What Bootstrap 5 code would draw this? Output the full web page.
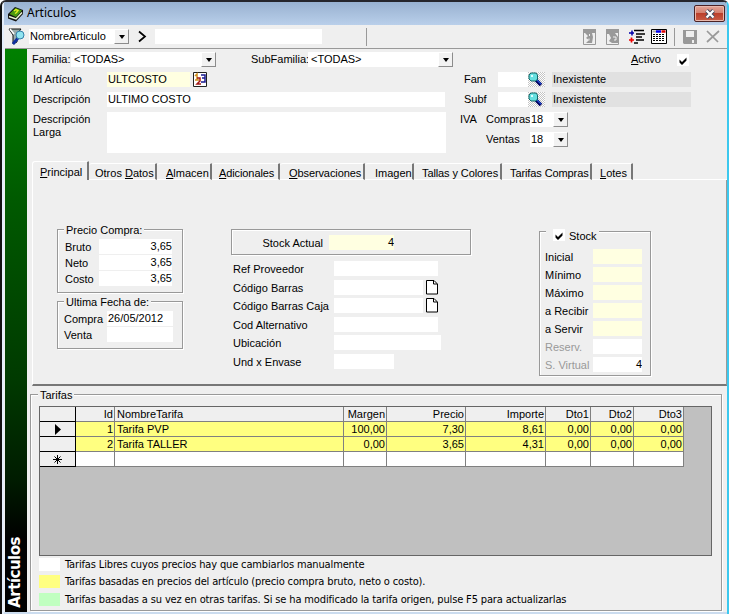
<!DOCTYPE html>
<html lang="es">
<head>
<meta charset="utf-8">
<title>Articulos</title>
<link href="https://cdn.jsdelivr.net/npm/bootstrap@5.3.0/dist/css/bootstrap.min.css" rel="stylesheet">
<style>
body{font:11px/15px "Liberation Sans",Arial,sans-serif;color:#000;background:#fff;width:729px;height:614px;overflow:hidden}
.win{width:729px;height:614px;background:#efefef;border-top:2px solid #25252b;border-left:2px solid #111;border-right:2px solid #3cc8ee;border-radius:6px 6px 0 0;box-shadow:inset 2px 0 #e4eefa,inset 0 -2px #cbdcef;padding-left:3px;white-space:nowrap;overflow:hidden}
.titlebar{height:23px;margin-left:-1px;background:linear-gradient(#98b1d0,#b9cfea);font:12px/22px "Noto Sans",sans-serif;padding:0 2px 0 3px}
.titlebar svg{margin-right:3px}
.closebtn{width:31px;height:17px;border:1px solid #4b2224;border-radius:2px;background:linear-gradient(#e3a698 0,#d4806f 45%,#bb3f2b 50%,#c95c45 100%);box-shadow:inset 0 0 0 1px #e9b9ad;margin-top:3px}
.closebtn svg{margin:0}
.toolbar{height:24px;border-bottom:1px solid #999;display:grid;grid-template-columns:24px 85px 15px 26px 167px 44px 217px 23px 23px 22px 23px 9px 23px 14px;align-items:center}
.filter{margin-left:3px}
.vsep{width:1px;height:18px;background:#999}
.fld{background:#fff;height:15px;overflow:hidden;line-height:14px;padding-left:1px}
.combo{padding-left:3px;line-height:15px}
.cream{background:#ffffe1}
.gray{background:#e1e1e1}
.drop{width:15px;height:15px;background:#f2f2f2;border:1px solid;border-color:#fff #8c8c8c #8c8c8c #fff;display:flex;align-items:center;justify-content:center}
.drop::after{content:"";border:3.5px solid transparent;border-top:4px solid #000;border-bottom:0}
.side{width:22px;background:linear-gradient(#008000 0,#005a00 150px,#003a00 330px,#001c00 430px,#000 490px);padding-bottom:4px}
.side span{writing-mode:vertical-rl;transform:rotate(180deg);color:#fff;font:bold 15px/20px "DejaVu Sans",sans-serif;letter-spacing:-.5px}
.main{width:700px}
.head{height:112px;padding-top:3px}
.hrow{display:grid;height:20px;align-items:start}
.r1{grid-template-columns:5px 39px 130px 50px 57px 130px 193px 46px 50px}
.r2{grid-template-columns:6px 74px 83px 3px 271px 34px 30px 24px 139px}
.r3{grid-template-columns:6px 74px 338px 19px 34px 30px 24px 139px}
.r4{grid-template-columns:6px 74px 339px 14px 26px 44px 23px 16px}
.area{height:41px}
.iva{row-gap:5px}
.r4>span{line-height:13px;padding-top:1px}
.chk{width:12px;height:12px;background:#fff;display:block}
.chk-active{margin-top:2px}
u{text-underline-offset:1px;text-decoration-thickness:1px}
.tabrow{height:19px;padding-left:5px;align-items:flex-end}
.tabrow>div{height:17px;border-right:2px solid #777;border-top:1px solid #fff;border-bottom:1px solid #fff;line-height:18px;border-radius:3px 1px 0 0}
.tabrow>.on{height:19px;border-bottom:0;border-left:1px solid #fff;line-height:20px;width:57px;padding-left:7px}
.t2{width:68px;padding-left:6px}.t3{width:55px;padding-left:9px}.t4{width:68px;padding-left:7px}.t5{width:85px;padding-left:9px}
.t6{width:49px;padding-left:10px}.t7{width:88px;padding-left:8px}.t8{width:90px;padding-left:8px}.t9{width:41px;padding-left:8px}
.t4,.t5,.t7,.t8{letter-spacing:-.1px}
.tabrow .fillline{flex:1;height:1px;border:0;background:#fff}
.panel{margin-left:5px;width:695px;height:206px;border-left:1px solid #fff;border-bottom:2px solid #777;border-right:1px solid #999}
.pane1{width:126px;margin:49px 0 0 24px}
.pane2{width:240px;margin:49px 0 0 48px}
.pane3{width:112px;margin:51px 0 0 68px}
.etch{border:1px solid #999;box-shadow:1px 1px #fff,inset 1px 1px #fff}
.cap{background:#efefef;width:max-content;height:14px;line-height:14px;padding:0 2px}
.g1{height:64px;margin-bottom:8px}.g1 .cap{margin:-7px 0 2px 6px}
.g1 .pr{display:grid;grid-template-columns:34px 73px;height:16px;padding-left:7px}
.g2{height:48px}.g2 .cap{margin:-7px 0 2px 6px}
.g2 .pr{display:grid;grid-template-columns:43px 66px;height:16px;padding-left:6px}
.pr>:first-child{padding-top:1px}
.stockbox{height:26px;display:grid;grid-template-columns:97px 65px;padding:5px 0 0 0;margin-bottom:6px}
.stockbox>span{padding:1px 6px 0 0}
.frow{display:grid;grid-template-columns:101px 89px 15px;padding-left:2px;height:18.6px;line-height:16px}
.frow svg{margin-left:3px}
.w104{width:104px}.w107{width:107px}.w60{width:60px}
.g3{height:145px}.g3 .cap{margin:-3px 0 4px 6px;padding-left:7px;height:16px;line-height:15px}
.g3 .cap svg{margin-right:4px}
.st{display:grid;grid-template-columns:48px 49px;height:18px;padding-left:5px;line-height:16px}
.off{color:#999}
.tbox{margin:8px 0 0 3px;width:692px;height:217px}
.tbox>.cap{margin:-8px 0 5px 7px;line-height:16px}
.gridbox{width:673px;height:150px;margin-left:8px;background:#c0c0c0;border:1px solid #666}
.tg{display:grid;width:644px;grid-template-columns:36px 39px 229px 43px 79px 80px 45px 43px 50px;grid-auto-rows:15px}
.tg>div{border-right:1px solid #808080;border-bottom:1px solid #808080;text-align:right;padding-right:1px;line-height:15px;overflow:hidden;height:15px}
.tg>.h{background:#efefef}.tg>.y{background:#ffff80}.tg>.w{background:#fff}
.tg>.l{text-align:left;padding-left:2px}
.tg>.k{border-color:#000;background:#efefef;display:flex;align-items:center;justify-content:center}
.legend{font:11px/14px "DejaVu Sans Condensed","DejaVu Sans",sans-serif;letter-spacing:-.145px;margin:2px 0 0 8px}
.legend>div{display:grid;grid-template-columns:21px auto;column-gap:5px;height:17px}
.legend>:last-child{padding-top:1px}
.legend i{height:13px}
.ly{background:#ffff80}.lg{background:#c0ffc0}
</style>
<script src="https://cdn.jsdelivr.net/npm/bootstrap@5.3.0/dist/js/bootstrap.bundle.min.js"></script>
</head>
<body>
<svg width="0" height="0" class="position-absolute"><defs>
<symbol id="tick" viewBox="0 0 12 12"><path d="M2.500 5.500v3l2.500 2.500 4.500-4.500V3.500L5 8z"/></symbol>
<pattern id="dots" width="2" height="2" patternUnits="userSpaceOnUse"><path fill="#fff" d="M0 0h2v2H0z"/><path fill="#c4c4c4" d="M0 0h1v1H0zM1 1h1v1H1z"/></pattern>
<symbol id="lens" viewBox="0 0 17 15"><path fill="url(#dots)" d="M0 0h17v15H0z"/><path d="M8 8l5 5" stroke="#000060" stroke-width="3.500"/><path d="M9 8l4 4" stroke="#2050d0" stroke-width="1.200"/><path d="M3 1h5l1.500 2v4L8 9H3L1 7V3z" fill="#66e0e0" stroke="#106868"/><path d="M3 3h2v2H3z" fill="#d8ffff"/></symbol>
<symbol id="sheet" viewBox="0 0 12 15"><path d="M.5.5H8L11.500 4v10H.5z" fill="#fff" stroke="#000"/><path d="M7.500.5v3.500H11" fill="none" stroke="#000"/></symbol>
</defs></svg>
<div class="win">
 <div class="titlebar d-flex">
  <svg width="17" height="17" viewBox="0 0 17 17" class="mt-1"><path d="M1 8L8 1l8 3v4L9 15.500 1 12.500z" fill="#111"/><path d="M2.500 8L8.500 2l6.500 2.500L9 11z" fill="#4c9a10"/><path d="M2 10.500l7 2.500 6-6.500" fill="none" stroke="#e8f4d0" stroke-width="1.500"/><path d="M7 5l2-1.500 2 1-1.500 2L8 7.500" fill="none" stroke="#e6f020" stroke-width="1.400"/></svg>
  <span class="flex-grow-1">Articulos</span>
  <div class="closebtn d-flex align-items-center justify-content-center"><svg width="12" height="10" viewBox="0 0 12 10"><path d="M2.500 1.500l7 7M9.500 1.500l-7 7" stroke="#444c60" stroke-width="4"/><path d="M2.500 1.500l7 7M9.500 1.500l-7 7" stroke="#fff" stroke-width="2.200"/></svg></div>
 </div>
 <div class="toolbar">
  <svg class="filter" width="18" height="17" viewBox="0 0 18 17"><path d="M1 1h12L9 6v8l-4 2V7z" fill="#9aa" stroke="#111"/><path d="M2 1l4 5" stroke="#fff" stroke-width="1.500"/><path d="M10 10l-5 6" stroke="#1030a0" stroke-width="2.800"/><circle cx="12" cy="7" r="4" fill="#90e4f0" stroke="#3480a8"/></svg>
  <div class="fld">NombreArticulo</div><div class="drop"></div>
  <svg width="10" height="13" viewBox="0 0 10 13" class="ms-2 overflow-visible"><path d="M2 1.500l6 5-6 5" fill="none" stroke="#000" stroke-width="1.700"/></svg>
  <div class="fld"></div><span></span><div class="vsep"></div>
  <svg width="13" height="16" viewBox="0 0 13 16"><path d="M.5.5h12v15H.5z" fill="#efefef" stroke="#999"/><path d="M0 0h13v4h-4l1 4-1 6H3l3-3-3-2 2-2-3-3H0z" fill="#999"/><path d="M6.500 5v2M6 9.500v2" stroke="#eee"/></svg>
  <svg width="13" height="16" viewBox="0 0 13 16"><path d="M.5.5h12v15H.5z" fill="#efefef" stroke="#999"/><path d="M0 0h13v4H9l3 4v6H6l-3-2 2-3-2-4H0z" fill="#999"/><path d="M7 8h3v3H8" stroke="#eee" fill="none"/></svg>
  <svg width="16" height="16" viewBox="0 0 16 16"><path d="M0 4h5M3 1.500v5" stroke="#00a" stroke-width="1.500"/><path d="M0 11h5M2.500 8.500v5" stroke="#e00" stroke-width="1.700"/><path d="M5 1.500h10M7 5h9M7 8h6M7 11h8M5 14h4" stroke="#000" stroke-width="1.500"/></svg>
  <svg width="16" height="15" viewBox="0 0 16 15"><path d="M.5.5h15v14H.5z" fill="#fff" stroke="#000"/><path d="M5 2.500h5" stroke="#00e" stroke-width="2.500"/><path d="M10.500 2.500h4" stroke="#d00" stroke-width="2.500"/><path d="M1.500 2.500H5" stroke="#aaa" stroke-width="2"/><path d="M2 5.500h12M2 7.500h12M2 9.500h12M2 11.500h12" stroke="#000" stroke-dasharray="2 1"/></svg>
  <div class="vsep"></div>
  <svg width="14" height="14" viewBox="0 0 14 14"><path d="M0 0h14v14H1l-1-1z" fill="#999"/><path d="M3 1h8v6H3zM9 10h2v3H9z" fill="#efefef"/></svg>
  <svg width="14" height="13" viewBox="0 0 14 13"><path d="M1 1l11 11M13 1L1 12" stroke="#999" stroke-width="1.700"/></svg>
 </div>
 <div class="d-flex" style="height:563px">
  <div class="side d-flex align-items-end"><span>Artículos</span></div>
  <div class="main">
   <div class="head">
    <div class="hrow r1"><i></i><span>Familia:</span><div class="fld combo">&lt;TODAS&gt;</div><div class="drop"></div><span>SubFamilia:</span><div class="fld combo">&lt;TODAS&gt;</div><div class="drop"></div><span><u>A</u>ctivo</span><svg class="chk chk-active"><use href="#tick"/></svg></div>
    <div class="hrow r2"><i></i><span>Id Artículo</span><div class="fld cream">ULTCOSTO</div><i></i><svg width="14" height="15" viewBox="0 0 14 15"><path d="M.5.5h13v14H.5z" fill="#fff" stroke="#222"/><path d="M2 4l2-2v6M2 8h4" fill="none" stroke="#d09020" stroke-width="1.500"/><path d="M4 6h3v3l-3 3h4" fill="none" stroke="#a01818" stroke-width="1.500"/><path d="M8 3h4v3H9h3v4H8" fill="none" stroke="#181890" stroke-width="1.500"/></svg><span>Fam</span><div class="fld"></div><svg width="17" height="15"><use href="#lens"/></svg><div class="fld gray">Inexistente</div></div>
    <div class="hrow r3"><i></i><span>Descripción</span><div class="fld">ULTIMO COSTO</div><i></i><span>Subf</span><div class="fld"></div><svg width="17" height="15"><use href="#lens"/></svg><div class="fld gray">Inexistente</div></div>
    <div class="hrow r4"><i></i><span>Descripción<br>Larga</span><div class="fld area"></div><i></i><div>IVA</div><div class="d-grid iva"><div>Compras</div><div>Ventas</div></div><div class="d-grid iva"><div class="fld me-px">18</div><div class="fld">18</div></div><div class="d-grid iva"><div class="drop"></div><div class="drop"></div></div></div>
   </div>
   <div class="tabrow d-flex"><div class="on"><u>P</u>rincipal</div><div class="t2">Otros <u>D</u>atos</div><div class="t3"><u>A</u>lmacen</div><div class="t4"><u>A</u>dicionales</div><div class="t5"><u>O</u>bservaciones</div><div class="t6">Imagen</div><div class="t7">Tallas y Colores</div><div class="t8">Tarifas Compras</div><div class="t9"><u>L</u>otes</div><div class="fillline"></div></div>
   <div class="panel d-flex">
    <div class="pane1">
     <div class="etch g1"><div class="cap">Precio Compra:</div><div class="pr"><span>Bruto</span><div class="fld text-end">3,65</div></div><div class="pr"><span>Neto</span><div class="fld text-end">3,65</div></div><div class="pr"><span>Costo</span><div class="fld text-end">3,65</div></div></div>
     <div class="etch g2"><div class="cap">Ultima Fecha de:</div><div class="pr"><span>Compra</span><div class="fld">26/05/2012</div></div><div class="pr"><span>Venta</span><div class="fld"></div></div></div>
    </div>
    <div class="pane2">
     <div class="etch stockbox"><span class="text-end">Stock Actual</span><div class="fld cream text-end">4</div></div>
     <div class="frow"><span>Ref Proveedor</span><div class="fld w104"></div></div>
     <div class="frow"><span>Código Barras</span><div class="fld"></div><svg width="12" height="15"><use href="#sheet"/></svg></div>
     <div class="frow"><span>Código Barras Caja</span><div class="fld"></div><svg width="12" height="15"><use href="#sheet"/></svg></div>
     <div class="frow"><span>Cod Alternativo</span><div class="fld w104"></div></div>
     <div class="frow"><span>Ubicación</span><div class="fld w107"></div></div>
     <div class="frow"><span>Und x Envase</span><div class="fld w60"></div></div>
    </div>
    <div class="pane3"><div class="etch g3"><div class="cap d-flex"><svg class="chk"><use href="#tick"/></svg>Stock</div>
     <div class="st"><span>Inicial</span><div class="fld cream"></div></div><div class="st"><span>Mínimo</span><div class="fld cream"></div></div><div class="st"><span>Máximo</span><div class="fld cream"></div></div><div class="st"><span>a Recibir</span><div class="fld cream"></div></div><div class="st"><span>a Servir</span><div class="fld cream"></div></div><div class="st"><span class="off">Reserv.</span><div class="fld"></div></div><div class="st"><span class="off">S. Virtual</span><div class="fld text-end">4</div></div>
    </div></div>
   </div>
   <div class="tbox etch"><div class="cap">Tarifas</div>
    <div class="gridbox"><div class="tg">
     <div class="k"></div><div class="h">Id</div><div class="h l">NombreTarifa</div><div class="h">Margen</div><div class="h">Precio</div><div class="h">Importe</div><div class="h">Dto1</div><div class="h">Dto2</div><div class="h">Dto3</div>
     <div class="k"><svg width="7" height="11"><path d="M1 0v11l6-5.500z"/></svg></div><div class="y">1</div><div class="y l">Tarifa PVP</div><div class="y">100,00</div><div class="y">7,30</div><div class="y">8,61</div><div class="y">0,00</div><div class="y">0,00</div><div class="y">0,00</div>
     <div class="k"></div><div class="y">2</div><div class="y l">Tarifa TALLER</div><div class="y">0,00</div><div class="y">3,65</div><div class="y">4,31</div><div class="y">0,00</div><div class="y">0,00</div><div class="y">0,00</div>
     <div class="k"><svg width="9" height="9"><path d="M4.500 0v9M0 4.500h9M1.500 1.500l6 6M7.500 1.500l-6 6" stroke="#000"/></svg></div><div class="w"></div><div class="w"></div><div class="w"></div><div class="w"></div><div class="w"></div><div class="w"></div><div class="w"></div><div class="w"></div>
    </div></div>
    <div class="legend"><div><i class="bg-white"></i><span>Tarifas Libres cuyos precios hay que cambiarlos manualmente</span></div><div><i class="ly"></i><span>Tarifas basadas en precios del artículo (precio compra bruto, neto o costo).</span></div><div><i class="lg"></i><span>Tarifas basadas a su vez en otras tarifas. Si se ha modificado la tarifa origen, pulse F5 para actualizarlas</span></div></div>
   </div>
  </div>
 </div>
</div>
</body>
</html>
